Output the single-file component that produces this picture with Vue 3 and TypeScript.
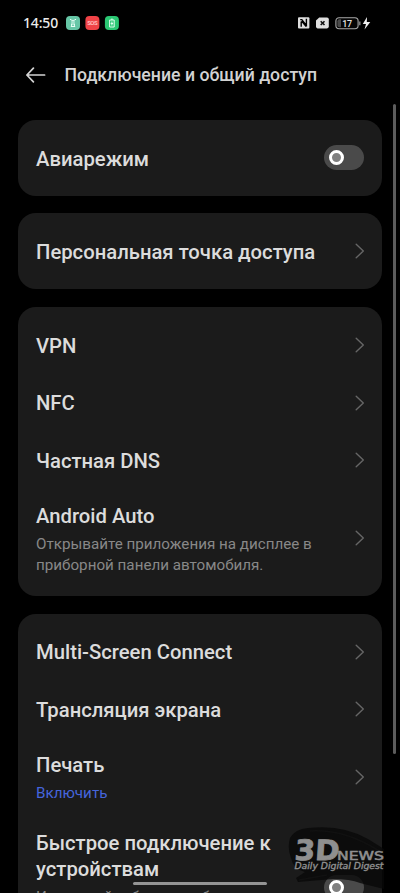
<script setup lang="ts">
interface Row {
  title: string
  note?: string
  control: 'toggle' | 'chevron'
  kind: 'solo' | 'single' | 'android' | 'print' | 'quick'
  accent?: boolean
}

const groups: Row[][] = [
  [{ title: 'Авиарежим', control: 'toggle', kind: 'solo' }],
  [{ title: 'Персональная точка доступа', control: 'chevron', kind: 'solo' }],
  [
    { title: 'VPN', control: 'chevron', kind: 'single' },
    { title: 'NFC', control: 'chevron', kind: 'single' },
    { title: 'Частная DNS', control: 'chevron', kind: 'single' },
    {
      title: 'Android Auto',
      note: 'Открывайте приложения на дисплее в приборной панели автомобиля.',
      control: 'chevron',
      kind: 'android',
    },
  ],
  [
    { title: 'Multi-Screen Connect', control: 'chevron', kind: 'single' },
    { title: 'Трансляция экрана', control: 'chevron', kind: 'single' },
    { title: 'Печать', note: 'Включить', control: 'chevron', kind: 'print', accent: true },
    {
      title: 'Быстрое подключение к устройствам',
      note: 'Используйте более удобные',
      control: 'toggle',
      kind: 'quick',
    },
  ],
]
</script>

<template>
  <div class="screen">
    <div class="status">
      <span class="time">14:50</span>
      <svg class="apps" width="54" height="14" viewBox="0 0 54 14">
        <rect width="14" height="14" rx="4" fill="#66c6a6" />
        <path d="M4 3.2l2 1.2h2l2-1.2M5.2 6h3.6M5 8h4M4.8 10.5h4.4M5.6 8v2.5M8.4 8v2.5" fill="none" stroke="#e8fff6" stroke-width="1" />
        <rect x="19.4" width="14" height="14" rx="4" fill="#f04347" />
        <text x="26.4" y="9.2" font-size="6" font-weight="600" text-anchor="middle" textLength="10.5" fill="#ffc4c4">SOS</text>
        <rect x="38.9" width="14" height="14" rx="4" fill="#2bc873" />
        <path d="M43.6 4h4.6v7h-4.6zM45 3.2h1.8M45.9 5.5v4M44.7 7.5h2.4" fill="none" stroke="#e2fff0" stroke-width="1" />
      </svg>
      <svg class="system" width="76" height="16" viewBox="0 0 76 16">
        <rect x="0" y="2.2" width="11.4" height="11.4" rx="1" fill="#dedede" />
        <path d="M2.2 4.6h1.6l4 5.2M3.2 6.6v5.2M3.6 6l4.6 5.6M8.4 11.6V3.8" fill="none" stroke="#000" stroke-width="1.4" />
        <path d="M21.2 2.4h7.8q1.8 0 1.8 1.8v7.4q0 1.8-1.8 1.8h-9.4q-1.6 0-1.6-1.8V5.6z" fill="#dedede" />
        <path d="M22.7 6.2l3.8 3.8m0-3.8l-3.8 3.8" stroke="#111" stroke-width="1.6" />
        <rect x="37.9" y="2.7" width="22.2" height="11" rx="3.2" fill="#050505" stroke="#a9a9a9" stroke-width="1.1" />
        <path d="M41.4 4.2H43v8h-1.6q-2 0-2-2v-4q0-2 2-2z" fill="#4a4a4a" />
        <path d="M61.8 6.4v3.8" stroke="#888" stroke-width="1.4" />
        <text x="49.2" y="11.5" font-size="9" font-weight="500" text-anchor="middle" textLength="10" fill="#e4e4e4">17</text>
        <path d="M69 2L64.8 9h3.2l-1.5 5.4L72.3 7h-3.5z" fill="#eee" />
      </svg>
    </div>

    <header class="header">
      <svg class="back" width="20" height="16" viewBox="0 0 20 16">
        <path d="M18.6 8H.9M7.4 1.2L.9 8l6.5 6.8" fill="none" stroke="#d4d4d4" stroke-width="1.7" stroke-linecap="round" stroke-linejoin="round" />
      </svg>
      <h1>Подключение и общий доступ</h1>
    </header>

    <main class="groups">
      <section v-for="(group, g) in groups" :key="g" class="card">
        <div v-for="row in group" :key="row.title" class="row" :class="row.kind">
          <div class="text">
            <div class="title">{{ row.title }}</div>
            <div v-if="row.note" class="note" :class="{ accent: row.accent }">{{ row.note }}</div>
          </div>
          <span v-if="row.control === 'toggle'" class="toggle"><i class="knob"></i></span>
          <svg v-else class="chevron" width="10" height="16" viewBox="0 0 10 16">
            <path d="M1.2 1.2L8.3 8l-7.1 6.8" fill="none" stroke="#666" stroke-width="1.4" stroke-linecap="round" stroke-linejoin="round" />
          </svg>
        </div>
      </section>
    </main>

    <div class="scrollbar"></div>
    <div class="home"></div>

    <svg class="watermark" width="112" height="68" viewBox="0 0 112 68">
      <path d="M2 13Q7 4 20 3Q54-1 80 14L96 24V64L72 58Q62 54 45 54L10 57L8 53L17 47Q5 44 3 33Q-1 23 2 13Z" fill="#080808" fill-opacity=".78" />
      <path d="M22 6Q57 4 91 26M11 55L39 50" fill="none" stroke="#111" stroke-width="1.5" />
      <g fill="#8f8f8f">
        <text class="mark" transform="translate(6 34.8) skewX(-4)" font-size="28" textLength="45" lengthAdjust="spacingAndGlyphs" stroke="#8f8f8f" stroke-width=".8">3D</text>
        <text class="news" x="49" y="35.3" font-size="11.5" textLength="47" lengthAdjust="spacingAndGlyphs" stroke="#8f8f8f" stroke-width=".5">NEWS</text>
        <text class="tagline" x="6.5" y="43.8" font-size="8" textLength="89" lengthAdjust="spacingAndGlyphs" stroke="#8f8f8f" stroke-width=".35">Daily Digital Digest</text>
      </g>
    </svg>
  </div>
</template>

<style>
body {
  background: #000;
  overflow: hidden;
}
</style>

<style scoped>
.screen {
  position: relative;
  box-sizing: border-box;
  width: 400px;
  height: 893px;
  overflow: hidden;
  background: #000;
  color: #dcdcdc;
  font-family: Roboto, "Noto Sans", sans-serif;
}
.status {
  display: flex;
  align-items: center;
  height: 46px;
  padding: 0 26px 0 23px;
}
.time {
  width: 43px;
  font: 500 14px/20px "Noto Sans", sans-serif;
  letter-spacing: -0.15px;
  color: #ececec;
}
.system {
  margin-left: auto;
}
.header {
  display: flex;
  align-items: center;
  height: 57px;
  padding-left: 26px;
  gap: 18.5px;
}
h1 {
  margin: 0;
  font-size: 17.7px;
  line-height: 24px;
  font-weight: 500;
  white-space: nowrap;
  color: #d2d2d2;
}
.groups {
  display: flex;
  flex-direction: column;
  gap: 17.8px;
  padding: 17px 18px 0;
}
.card {
  box-sizing: border-box;
  padding: 9px 18px;
  border-radius: 18px;
  background: #1b1b1b;
}
.row {
  display: flex;
  align-items: center;
  justify-content: space-between;
  box-sizing: border-box;
}
.solo,
.single {
  height: 57.7px;
}
.solo .title,
.single .title {
  padding-top: 2px;
}
.android {
  height: 98px;
}
.print {
  height: 77px;
}
.android .text,
.print .text {
  padding-top: 2.4px;
}
.quick {
  height: 145px;
}
.quick .text {
  align-self: flex-start;
  padding-top: 14.6px;
}
.text {
  width: 286px;
}
.title {
  font-size: 20.25px;
  line-height: 26.6px;
  font-weight: 500;
  white-space: nowrap;
}
.quick .title {
  width: 245px;
  white-space: normal;
}
.note {
  margin-top: 4px;
  font-size: 15.2px;
  line-height: 20.6px;
  color: #888;
}
.accent {
  color: #4565dc;
}
.chevron {
  flex: none;
  margin-right: -1px;
}
.toggle {
  display: flex;
  align-items: center;
  box-sizing: border-box;
  flex: none;
  width: 40.5px;
  height: 25px;
  padding-left: 5px;
  border-radius: 13px;
  background: #4a4a4a;
}
.knob {
  box-sizing: border-box;
  width: 15px;
  height: 15px;
  border: 3.5px solid #fff;
  border-radius: 50%;
  background: #808080;
}
.scrollbar {
  position: absolute;
  top: 104px;
  left: 392.5px;
  width: 3px;
  height: 650px;
  border-radius: 2px;
  background: #5c5c5c;
}
.home {
  position: absolute;
  top: 882px;
  left: 133px;
  width: 134px;
  height: 3px;
  border-radius: 2px;
  background: #949494;
}
.watermark {
  position: absolute;
  top: 825px;
  left: 288px;
}
.mark {
  font-family: "DejaVu Sans", sans-serif;
  font-weight: 700;
}
.news {
  font-family: "DejaVu Sans", sans-serif;
  font-weight: 400;
}
.tagline {
  font-family: "DejaVu Sans", sans-serif;
  font-weight: 400;
  font-style: oblique;
}
</style>
